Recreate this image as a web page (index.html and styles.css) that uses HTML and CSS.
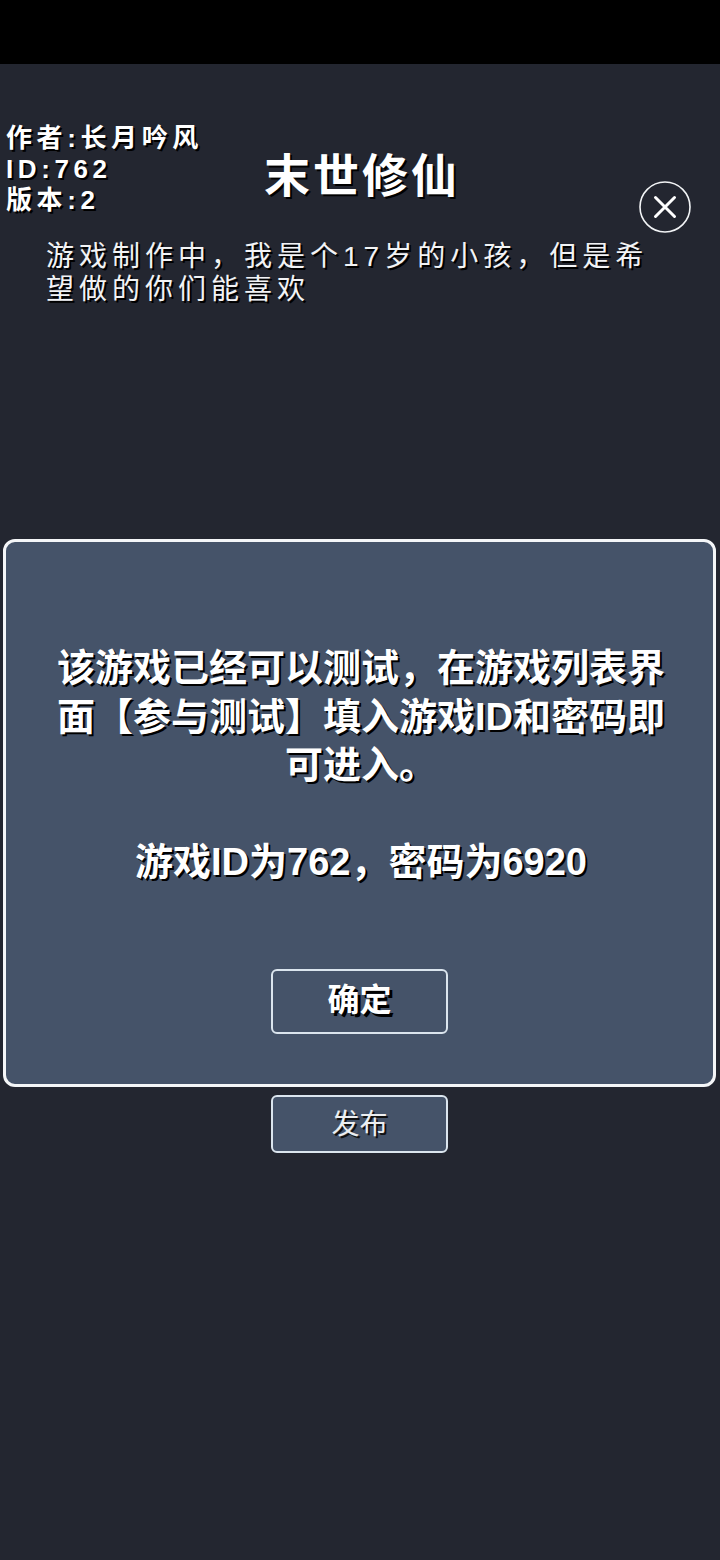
FILE: index.html
```html
<!DOCTYPE html>
<html lang="zh-CN">
<head>
<meta charset="utf-8">
<title>末世修仙</title>
<link rel="stylesheet" href="styles.css">
</head>
<body>
<div class="page">
  <div class="status-bar"></div>
  <main class="screen">
    <header class="head">
      <div class="meta">
        <div>作者:长月吟风</div>
        <div>ID:762</div>
        <div>版本:2</div>
      </div>
      <h1 class="title">末世修仙</h1>
      <button class="close" type="button" aria-label="关闭">
        <svg viewBox="0 0 52 52" width="52" height="52" aria-hidden="true">
          <circle cx="26" cy="26" r="25" fill="none" stroke="#f2f4f6" stroke-width="1.6"/>
          <path d="M16.5 16.5 L35.5 35.5 M35.5 16.5 L16.5 35.5" fill="none" stroke="#fff" stroke-width="3" stroke-linecap="round"/>
        </svg>
      </button>
    </header>
    <p class="desc">游戏制作中，我是个17岁的小孩，但是希望做的你们能喜欢</p>
    <button class="btn publish" type="button">发布</button>
  </main>
  <section class="dialog" role="dialog">
    <p class="dialog-text">该游戏已经可以测试，在游戏列表界面【参与测试】填入游戏ID和密码即可进入。<br><br>游戏ID为762，密码为6920</p>
    <button class="btn confirm" type="button">确定</button>
  </section>
</div>
</body>
</html>
```

FILE: styles.css
```css
* { box-sizing: border-box; }
html, body { margin: 0; padding: 0; }
body {
  width: 720px;
  height: 1560px;
  overflow: hidden;
  background: #232630;
  font-family: "Liberation Sans", "Noto Sans CJK SC", sans-serif;
  color: #fff;
}
.page { position: relative; width: 720px; height: 1560px; }
.status-bar { height: 64px; background: #000; }
.screen { display: flex; flex-direction: column; }
.head {
  display: grid;
  grid-template-columns: 258px auto 1fr;
  padding: 59px 29px 0 6px;
}
.meta {
  font-size: 26px;
  font-weight: 700;
  line-height: 31px;
  letter-spacing: 4.6px;
  white-space: nowrap;
  text-shadow: 2px 2px 0 #000;
}
.title {
  margin: 25px 0 0;
  font-size: 46px;
  font-weight: 700;
  line-height: 56px;
  letter-spacing: 3px;
  white-space: nowrap;
  text-shadow: 2px 2px 0 #000;
  height: 56px;
}
.close {
  justify-self: end;
  align-self: start;
  width: 52px;
  height: 52px;
  margin: 58px 0 0;
  padding: 0;
  border: 0;
  background: none;
  display: block;
}
.close svg { display: block; }
.desc {
  margin: 7px 0 0;
  padding: 0 62px 0 46px;
  font-size: 28px;
  line-height: 33px;
  letter-spacing: 5px;
  color: #f2f3f5;
  text-shadow: 2px 2px 0 #000;
}
.btn {
  display: block;
  width: 177px;
  border: 2px solid #dbe5ee;
  border-radius: 6px;
  background: #455369;
  color: #fff;
  font-family: inherit;
  text-align: center;
}
.publish {
  align-self: flex-start;
  margin: 789px 0 0 271px;
  height: 58px;
  padding: 0 0 5px;
  font-size: 28px;
  color: #eceef1;
  text-shadow: 2px 2px 0 #111;
}
.dialog {
  position: absolute;
  left: 3px;
  top: 539px;
  width: 713px;
  height: 548px;
  border: 3px solid #f4f6f8;
  border-radius: 12px;
  background: #455369;
  display: flex;
  flex-direction: column;
  align-items: center;
  padding: 102px 47px 0 50px;
}
.dialog-text {
  margin: 0;
  width: 100%;
  height: 325px;
  font-size: 38px;
  font-weight: 700;
  line-height: 48.5px;
  text-align: center;
  text-shadow: 2px 2px 0 #000;
}
.confirm {
  height: 65px;
  margin-left: -3px;
  padding: 0 0 9px;
  font-size: 32px;
  font-weight: 700;
  text-shadow: 3px 3px 0 #000;
}
```
